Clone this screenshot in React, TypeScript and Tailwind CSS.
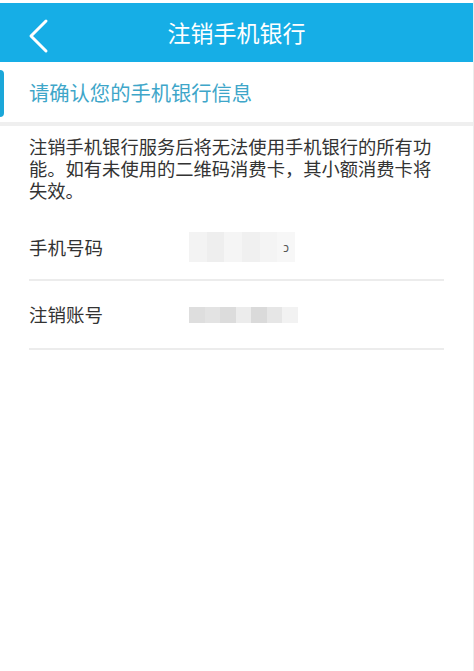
const font = { fontFamily: '"Noto Sans CJK SC", "Noto Sans", sans-serif' };

function Mosaic({ cells, className }: { cells: string[]; className: string }) {
  return (
    <div className={`flex ${className}`}>
      {cells.map((c, i) => (
        <div key={i} className={`h-full flex-1 ${c}`} />
      ))}
    </div>
  );
}

export default function App() {
  return (
    <div className="min-h-[671px] w-[474px] bg-white border-r border-[#ececec]" style={font}>
      <div className="h-[3px] bg-white" />
      <header className="relative flex h-[59px] items-center justify-center bg-[#16aee6]">
        {/* back chevron */}
        <svg className="absolute left-[26px] top-[15px]" width="24" height="36" viewBox="0 0 24 36" fill="none">
          <polyline points="20,3 5,18 20,33" stroke="white" strokeWidth="3" strokeLinecap="round" strokeLinejoin="round" />
        </svg>
        <h1 className="text-[23px] leading-none text-white">注销手机银行</h1>
      </header>

      <div className="relative flex h-[60px] items-center pl-[29px]">
        <div className="absolute left-0 top-[8px] h-[47px] w-[4px] rounded-r-sm bg-[#1ba7d9]" />
        <span className="text-[20.3px] leading-none text-[#3ea6c9]">请确认您的手机银行信息</span>
      </div>
      <div className="h-[4px] bg-[#efefef]" />

      <div className="px-[29px] pt-[9px]">
        <p className="text-[18.3px] leading-[22px] text-[#333]">
          注销手机银行服务后将无法使用手机银行的所有功能。如有未使用的二维码消费卡，其小额消费卡将失效。
        </p>

        <div className="flex h-[80px] items-center border-b-2 border-[#ececec] pt-[14px]">
          <span className="w-[160px] text-[18.5px] leading-none text-[#333]">手机号码</span>
          <div className="relative h-[30px] w-[106px]">
            <Mosaic
              className="h-[30px] w-[106px]"
              cells={['bg-[#f3f3f3]', 'bg-[#eeeeee]', 'bg-[#f5f5f5]', 'bg-[#f0f0f0]', 'bg-[#f4f4f4]', 'bg-[#f7f7f7]']}
            />
            <span className="absolute right-[6px] top-[9px] text-[12px] leading-none text-[#555]">ↄ</span>
          </div>
        </div>

        <div className="flex h-[69px] items-center border-b-2 border-[#ececec]">
          <span className="w-[160px] text-[18.5px] leading-none text-[#333]">注销账号</span>
          <Mosaic
            className="h-[16px] w-[109px]"
            cells={['bg-[#dedede]', 'bg-[#e3e3e3]', 'bg-[#dcdcdc]', 'bg-[#ececec]', 'bg-[#dadada]', 'bg-[#e6e6e6]', 'bg-[#f2f2f2]']}
          />
        </div>
      </div>
    </div>
  );
}
